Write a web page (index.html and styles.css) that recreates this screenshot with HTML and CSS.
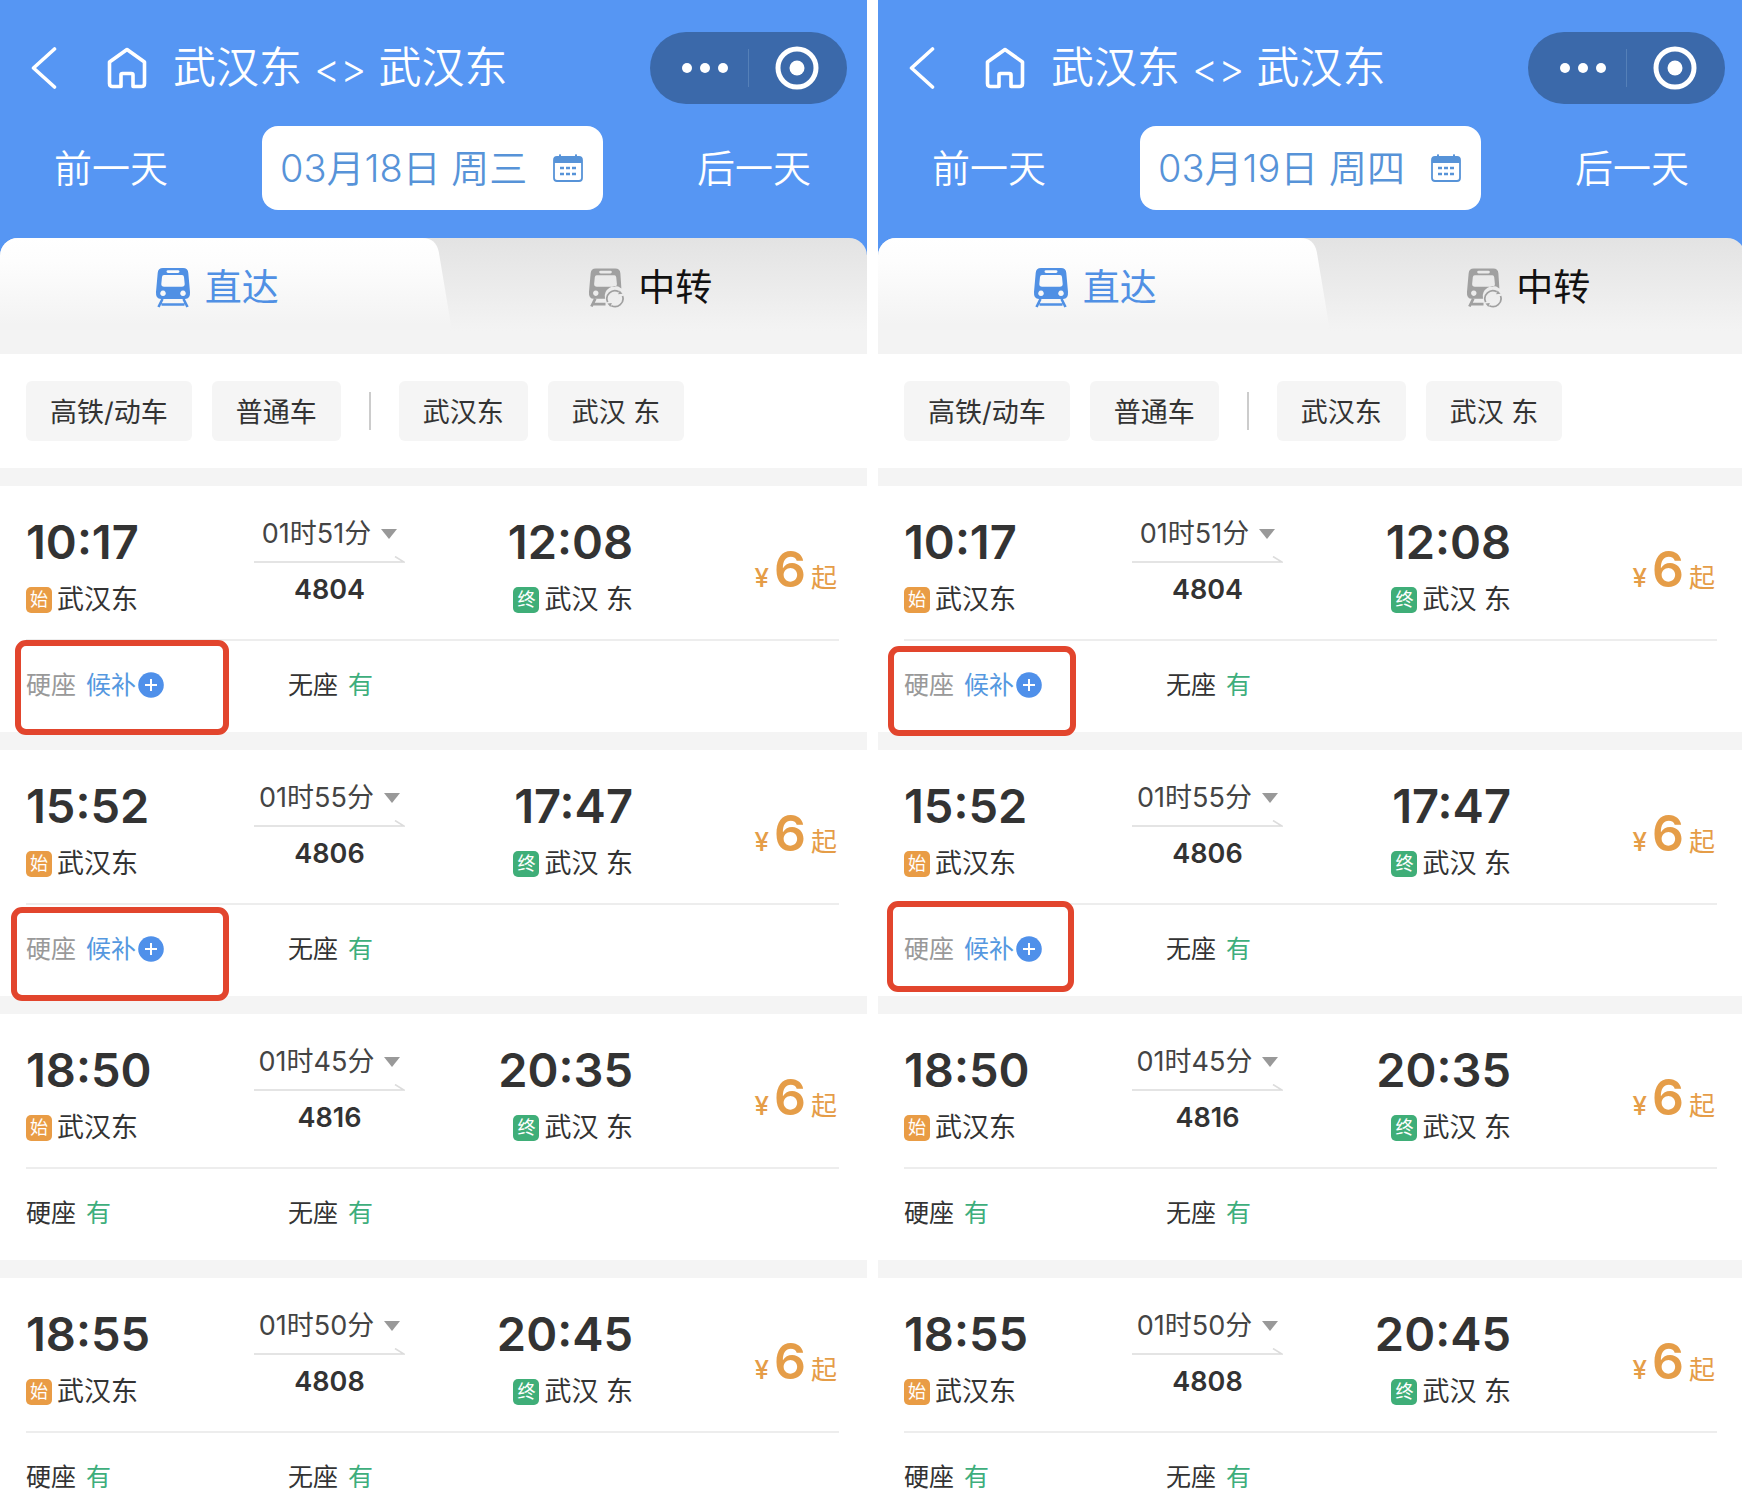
FILE: index.html
```html
<!DOCTYPE html>
<html lang="zh-CN">
<head>
<meta charset="utf-8">
<meta name="viewport" content="width=device-width, initial-scale=1">
<title>武汉东 &lt;&gt; 武汉东</title>
<link rel="stylesheet" href="styles.css">
</head>
<body>
<svg class="sprite" aria-hidden="true">
  <symbol id="back" viewBox="0 0 26 42"><path d="M23.500 2 2.500 21l21 19" fill="none" stroke="currentColor" stroke-width="3.600" stroke-linecap="round" stroke-linejoin="round"/></symbol>
  <symbol id="home" viewBox="0 0 40 42"><path d="M20 2.500 37.500 15v21.500q0 3-3 3h-8.500V28q0-1.500-1.500-1.500h-9q-1.500 0-1.500 1.500v11.500H5.500q-3 0-3-3V15z" fill="none" stroke="currentColor" stroke-width="3.600" stroke-linejoin="round"/></symbol>
  <symbol id="dots" viewBox="0 0 46 10"><g fill="currentColor"><circle cx="5" cy="5" r="5"/><circle cx="23" cy="5" r="5"/><circle cx="41" cy="5" r="5"/></g></symbol>
  <symbol id="target" viewBox="0 0 44 44"><circle cx="22" cy="22" r="19" fill="none" stroke="currentColor" stroke-width="5"/><circle cx="22" cy="22" r="7.500" fill="currentColor"/></symbol>
  <symbol id="calendar" viewBox="0 0 30 28"><path d="M4 3h22q3 0 3 3v18q0 3-3 3H4q-3 0-3-3V6q0-3 3-3z" fill="none" stroke="currentColor" stroke-width="1.800"/><path d="M1 9V5q0-2 3-2h2V1.500q0-1.500 1-1.500t1 1.500V3h14V1.500Q22 0 23 0t1 1.500V3h2q3 0 3 2v4z" fill="currentColor"/><path d="M7 14h4M13 14h4M19 14h4M7 20h4M13 20h4M19 20h4" stroke="currentColor" stroke-width="2.600"/></symbol>
  <symbol id="train" viewBox="0 0 36 40"><path fill="currentColor" fill-rule="evenodd" d="M8 0h20q5 0 5.300 5L35 24q.5 7-5 7H6q-5.500 0-5-7L2.700 5Q3 0 8 0zm5 2.200q-1.500 0-1.500 1.400T13 5h10q1.500 0 1.500-1.400T23 2.200zM9 7Q7.200 7 7 9l-.7 7q0 2.800 2.800 2.800h17.800q2.800 0 2.800-2.800L29 9q-.2-2-2-2zM8 22.500a2.800 2.800 0 1 0 .01 0zm20 0a2.800 2.800 0 1 0 .01 0z"/><path d="M7.500 31 3.500 39M28.500 31l4 8M6.500 36.500h23" fill="none" stroke="currentColor" stroke-width="2.600"/></symbol>
  <symbol id="transfer" viewBox="0 0 37 40"><path fill="currentColor" fill-rule="evenodd" d="M8 0h20q5 0 5.300 5l1 15.500A10.500 10.500 0 0 0 17.500 31H6q-5.500 0-5-7L2.700 5Q3 0 8 0zm5 2.200q-1.500 0-1.500 1.400T13 5h10q1.500 0 1.500-1.400T23 2.200zM9 7Q7.200 7 7 9l-.7 7q0 2.800 2.800 2.800h17.800q2.800 0 2.800-2.800L29 9q-.2-2-2-2zM8 22.500a2.800 2.800 0 1 0 .01 0z"/><path d="M7.500 31 3.500 39M5 36.500h13" fill="none" stroke="currentColor" stroke-width="2.800"/><path d="M20.200 34.500a8.200 8.200 0 0 1 11.500-10.600M35.500 28.200a8.200 8.200 0 0 1-11.500 10" fill="none" stroke="currentColor" stroke-width="1.800"/><path d="m31 26.500 4.500-.5-3-3.500zM24.500 35.500l-4.500.5 3 3.500z" fill="currentColor"/></symbol>
  <symbol id="arrow" viewBox="0 0 151 8"><path d="M0 6h150L141 0.500" fill="none" stroke="#dcdcdc" stroke-width="1.600"/></symbol>
  <symbol id="caret" viewBox="0 0 16 10"><path d="M0 0h16L8 10z" fill="#999"/></symbol>
  <symbol id="plus" viewBox="0 0 26 26"><circle cx="13" cy="13" r="12.800" fill="#4f90ea"/><path d="M13 7v12M7 13h12" stroke="#fff" stroke-width="2"/></symbol>
</svg>

<main class="compare">
  <section class="panel">
    <div class="screen">
      <header class="header">
        <div class="titlebar">
          <a class="back" href="#" aria-label="返回"><svg><use href="#back"/></svg></a>
          <a class="home" href="#" aria-label="首页"><svg><use href="#home"/></svg></a>
          <h1 class="route">武汉东 <span class="swap">&lt;&gt;</span> 武汉东</h1>
          <div class="capsule">
            <button class="more" aria-label="更多"><svg><use href="#dots"/></svg></button>
            <button class="close" aria-label="关闭"><svg><use href="#target"/></svg></button>
          </div>
        </div>
        <div class="datebar">
          <button class="day">前一天</button>
          <button class="date"><span>03月18日 周三</span><svg><use href="#calendar"/></svg></button>
          <button class="day">后一天</button>
        </div>
      </header>
      <nav class="tabs">
        <svg class="tab-shape" viewBox="0 0 450 116" preserveAspectRatio="none" aria-hidden="true"><defs><linearGradient id="fade" x1="0" y1="0" x2="0" y2="1"><stop offset="0" stop-color="#fff"/><stop offset=".2" stop-color="#fdfdfd"/><stop offset=".75" stop-color="#f3f3f3"/></linearGradient></defs><path d="M0 0h422q13 0 16 14l12 72v30H0z" fill="url(#fade)"/></svg>
        <button class="tab active"><svg><use href="#train"/></svg>直达</button>
        <button class="tab"><svg><use href="#transfer"/></svg>中转</button>
      </nav>
      <div class="filters">
        <button class="chip">高铁/动车</button>
        <button class="chip">普通车</button>
        <span class="rule"></span>
        <button class="chip">武汉东</button>
        <button class="chip">武汉 东</button>
      </div>
      <article class="card">
        <div class="trip">
          <div class="stop"><time>10:17</time><p><i class="start">始</i>武汉东</p></div>
          <div class="leg"><button class="duration">01时51分<svg><use href="#caret"/></svg></button><svg class="arrow"><use href="#arrow"/></svg><b>4804</b></div>
          <div class="stop end"><time>12:08</time><p><i class="final">终</i>武汉 东</p></div>
          <p class="price"><small>¥</small><b>6</b><span>起</span></p>
        </div>
        <div class="seats">
          <p class="seat none">硬座<button class="wait">候补<svg><use href="#plus"/></svg></button></p>
          <p class="seat">无座<em>有</em></p>
        </div>
        <span class="mark mark-a"></span>
      </article>
      <article class="card">
        <div class="trip">
          <div class="stop"><time>15:52</time><p><i class="start">始</i>武汉东</p></div>
          <div class="leg"><button class="duration">01时55分<svg><use href="#caret"/></svg></button><svg class="arrow"><use href="#arrow"/></svg><b>4806</b></div>
          <div class="stop end"><time>17:47</time><p><i class="final">终</i>武汉 东</p></div>
          <p class="price"><small>¥</small><b>6</b><span>起</span></p>
        </div>
        <div class="seats">
          <p class="seat none">硬座<button class="wait">候补<svg><use href="#plus"/></svg></button></p>
          <p class="seat">无座<em>有</em></p>
        </div>
        <span class="mark mark-b"></span>
      </article>
      <article class="card">
        <div class="trip">
          <div class="stop"><time>18:50</time><p><i class="start">始</i>武汉东</p></div>
          <div class="leg"><button class="duration">01时45分<svg><use href="#caret"/></svg></button><svg class="arrow"><use href="#arrow"/></svg><b>4816</b></div>
          <div class="stop end"><time>20:35</time><p><i class="final">终</i>武汉 东</p></div>
          <p class="price"><small>¥</small><b>6</b><span>起</span></p>
        </div>
        <div class="seats">
          <p class="seat">硬座<em>有</em></p>
          <p class="seat">无座<em>有</em></p>
        </div>
      </article>
      <article class="card">
        <div class="trip">
          <div class="stop"><time>18:55</time><p><i class="start">始</i>武汉东</p></div>
          <div class="leg"><button class="duration">01时50分<svg><use href="#caret"/></svg></button><svg class="arrow"><use href="#arrow"/></svg><b>4808</b></div>
          <div class="stop end"><time>20:45</time><p><i class="final">终</i>武汉 东</p></div>
          <p class="price"><small>¥</small><b>6</b><span>起</span></p>
        </div>
        <div class="seats">
          <p class="seat">硬座<em>有</em></p>
          <p class="seat">无座<em>有</em></p>
        </div>
      </article>
    </div>
  </section>

  <section class="panel">
    <div class="screen">
      <header class="header">
        <div class="titlebar">
          <a class="back" href="#" aria-label="返回"><svg><use href="#back"/></svg></a>
          <a class="home" href="#" aria-label="首页"><svg><use href="#home"/></svg></a>
          <h1 class="route">武汉东 <span class="swap">&lt;&gt;</span> 武汉东</h1>
          <div class="capsule">
            <button class="more" aria-label="更多"><svg><use href="#dots"/></svg></button>
            <button class="close" aria-label="关闭"><svg><use href="#target"/></svg></button>
          </div>
        </div>
        <div class="datebar">
          <button class="day">前一天</button>
          <button class="date"><span>03月19日 周四</span><svg><use href="#calendar"/></svg></button>
          <button class="day">后一天</button>
        </div>
      </header>
      <nav class="tabs">
        <svg class="tab-shape" viewBox="0 0 450 116" preserveAspectRatio="none" aria-hidden="true"><path d="M0 0h422q13 0 16 14l12 72v30H0z" fill="url(#fade)"/></svg>
        <button class="tab active"><svg><use href="#train"/></svg>直达</button>
        <button class="tab"><svg><use href="#transfer"/></svg>中转</button>
      </nav>
      <div class="filters">
        <button class="chip">高铁/动车</button>
        <button class="chip">普通车</button>
        <span class="rule"></span>
        <button class="chip">武汉东</button>
        <button class="chip">武汉 东</button>
      </div>
      <article class="card">
        <div class="trip">
          <div class="stop"><time>10:17</time><p><i class="start">始</i>武汉东</p></div>
          <div class="leg"><button class="duration">01时51分<svg><use href="#caret"/></svg></button><svg class="arrow"><use href="#arrow"/></svg><b>4804</b></div>
          <div class="stop end"><time>12:08</time><p><i class="final">终</i>武汉 东</p></div>
          <p class="price"><small>¥</small><b>6</b><span>起</span></p>
        </div>
        <div class="seats">
          <p class="seat none">硬座<button class="wait">候补<svg><use href="#plus"/></svg></button></p>
          <p class="seat">无座<em>有</em></p>
        </div>
        <span class="mark mark-c"></span>
      </article>
      <article class="card">
        <div class="trip">
          <div class="stop"><time>15:52</time><p><i class="start">始</i>武汉东</p></div>
          <div class="leg"><button class="duration">01时55分<svg><use href="#caret"/></svg></button><svg class="arrow"><use href="#arrow"/></svg><b>4806</b></div>
          <div class="stop end"><time>17:47</time><p><i class="final">终</i>武汉 东</p></div>
          <p class="price"><small>¥</small><b>6</b><span>起</span></p>
        </div>
        <div class="seats">
          <p class="seat none">硬座<button class="wait">候补<svg><use href="#plus"/></svg></button></p>
          <p class="seat">无座<em>有</em></p>
        </div>
        <span class="mark mark-d"></span>
      </article>
      <article class="card">
        <div class="trip">
          <div class="stop"><time>18:50</time><p><i class="start">始</i>武汉东</p></div>
          <div class="leg"><button class="duration">01时45分<svg><use href="#caret"/></svg></button><svg class="arrow"><use href="#arrow"/></svg><b>4816</b></div>
          <div class="stop end"><time>20:35</time><p><i class="final">终</i>武汉 东</p></div>
          <p class="price"><small>¥</small><b>6</b><span>起</span></p>
        </div>
        <div class="seats">
          <p class="seat">硬座<em>有</em></p>
          <p class="seat">无座<em>有</em></p>
        </div>
      </article>
      <article class="card">
        <div class="trip">
          <div class="stop"><time>18:55</time><p><i class="start">始</i>武汉东</p></div>
          <div class="leg"><button class="duration">01时50分<svg><use href="#caret"/></svg></button><svg class="arrow"><use href="#arrow"/></svg><b>4808</b></div>
          <div class="stop end"><time>20:45</time><p><i class="final">终</i>武汉 东</p></div>
          <p class="price"><small>¥</small><b>6</b><span>起</span></p>
        </div>
        <div class="seats">
          <p class="seat">硬座<em>有</em></p>
          <p class="seat">无座<em>有</em></p>
        </div>
      </article>
    </div>
  </section>
</main>
</body>
</html>
```
FILE: styles.css
```css
* {
  box-sizing: border-box;
}

body {
  margin: 0;
  background: #fff;
  color: #333;
  font-family: Inter, "Noto Sans CJK SC", sans-serif;
}

h1,
p {
  margin: 0;
  font-weight: 400;
}

i,
em {
  font-style: normal;
}

a,
button {
  color: inherit;
  text-decoration: none;
}

button {
  padding: 0;
  border: 0;
  background: none;
  font: inherit;
}

svg {
  display: block;
  flex: none;
}

.sprite {
  position: absolute;
  width: 0;
  height: 0;
}

.compare {
  display: grid;
  grid-template-columns: 867fr 864fr;
  column-gap: 11px;
}

.panel {
  min-width: 0;
  overflow: hidden;
}

/* The second screen is cropped slightly on its right side. */
.panel + .panel .screen {
  margin-right: -3px;
}

/* Header */

.header {
  height: 256px;
  margin-bottom: -18px;
  padding-top: 32px;
  background: #5696f3;
  color: #fff;
}

.titlebar {
  display: flex;
  align-items: center;
  height: 72px;
  padding: 0 20px 0 31px;
}

.back svg {
  width: 26px;
  height: 42px;
}

.home {
  margin: 0 26px 0 50px;
}

.home svg {
  width: 40px;
  height: 42px;
}

.route {
  font-size: 43px;
  font-weight: 350;
  line-height: 60px;
  white-space: nowrap;
}

.swap {
  font-size: 40px;
}

.capsule {
  display: flex;
  align-items: center;
  width: 197px;
  height: 72px;
  margin-left: auto;
  border-radius: 36px;
  background: #3b69aa;
}

.more {
  display: flex;
  align-items: center;
  height: 38px;
  padding: 0 20px 0 32px;
  border-right: 1px solid #5580b8;
}

.more svg {
  width: 46px;
  height: 10px;
}

.close {
  margin-left: 26px;
}

.close svg {
  width: 44px;
  height: 44px;
}

.datebar {
  display: flex;
  align-items: center;
  justify-content: space-between;
  margin-top: 22px;
  padding: 0 56px 0 54px;
  font-size: 38px;
  font-weight: 350;
  line-height: 56px;
}

.date {
  display: flex;
  align-items: center;
  justify-content: space-between;
  width: 341px;
  height: 84px;
  padding: 0 20px 0 18px;
  border-radius: 16px;
  background: #fff;
  color: #5793d8;
  white-space: nowrap;
}

.date svg {
  width: 30px;
  height: 28px;
}

/* Tabs */

.tabs {
  position: relative;
  display: grid;
  grid-template-columns: 1fr 1fr;
  height: 116px;
  border-radius: 18px 18px 0 0;
  background: linear-gradient(#e3e3e3, #f3f3f3 80%);
  overflow: hidden;
}

.tab-shape {
  position: absolute;
  inset: 0 auto auto 0;
  width: 52%;
  height: 100%;
}

.tab {
  position: relative;
  display: flex;
  align-items: center;
  justify-content: center;
  gap: 14px;
  padding-bottom: 17px;
  color: #111;
  font-size: 37px;
  line-height: 56px;
}

.tab svg {
  width: 36px;
  height: 40px;
  color: #a0a0a0;
}

.active,
.active svg {
  color: #5090e4;
}

/* Filters */

.filters {
  display: flex;
  align-items: center;
  gap: 20px;
  height: 114px;
  padding: 0 26px;
}

.chip {
  height: 60px;
  padding: 3px 24px 0;
  border-radius: 6px;
  background: #f5f5f5;
  font-size: 27px;
  line-height: 57px;
  white-space: nowrap;
}

.rule {
  width: 2px;
  height: 38px;
  margin: 0 8px;
  background: #ccc;
}

/* Trains */

.card {
  position: relative;
  border-top: 18px solid #f4f4f4;
}

.trip {
  display: grid;
  grid-template-columns: 228fr 151fr 228fr 206fr;
  height: 155px;
  margin: 0 28px 0 26px;
  padding-top: 28px;
  border-bottom: 2px solid #ededed;
}

.stop time {
  display: block;
  font-size: 47px;
  font-weight: 600;
  line-height: 56px;
}

.stop p {
  display: flex;
  align-items: center;
  gap: 5px;
  margin-top: 10px;
  font-size: 27px;
  line-height: 40px;
}

.stop i {
  width: 26px;
  height: 26px;
  border-radius: 5px;
  color: #fff;
  font-size: 18px;
  line-height: 26px;
  text-align: center;
}

.start {
  background: #e99c45;
}

.final {
  background: #3fae78;
}

.end {
  display: flex;
  flex-direction: column;
  align-items: flex-end;
}

.leg {
  display: flex;
  flex-direction: column;
  align-items: center;
  font-size: 27px;
}

.duration {
  display: flex;
  align-items: center;
  gap: 10px;
  color: #444;
  line-height: 40px;
  white-space: nowrap;
}

.duration svg {
  width: 16px;
  height: 10px;
}

.arrow {
  width: 100%;
  height: 8px;
  margin-top: 2px;
}

.leg b {
  font-weight: 600;
  line-height: 52px;
}

.price {
  display: flex;
  align-items: baseline;
  justify-content: flex-end;
  gap: 5px;
  padding: 27px 2px 0 0;
  color: #e59d48;
  font-size: 26px;
  line-height: 56px;
}

.price small {
  font-size: 26px;
  font-weight: 500;
}

.price b {
  font-size: 50px;
  font-weight: 600;
}

.seats {
  display: grid;
  grid-template-columns: 262fr 551fr;
  padding: 28px 28px 31px 26px;
}

.card:last-child .seats {
  padding-bottom: 14px;
}

.seat {
  display: flex;
  align-items: center;
  gap: 10px;
  font-size: 25px;
  line-height: 32px;
}

.seat em {
  color: #3eae7c;
}

.none {
  color: #999;
}

.wait {
  display: flex;
  align-items: center;
  gap: 2px;
  color: #5598e0;
}

.wait svg {
  width: 26px;
  height: 26px;
}

/* Highlight boxes over the waitlist seats */

.mark {
  position: absolute;
  z-index: 1;
  border: 6px solid #e2452d;
  border-radius: 11px;
}

.mark-a {
  top: 154px;
  left: 15px;
  width: 214px;
  height: 95px;
}

.mark-b {
  top: 157px;
  left: 11px;
  width: 218px;
  height: 94px;
}

.mark-c {
  top: 160px;
  left: 10px;
  width: 188px;
  height: 90px;
}

.mark-d {
  top: 151px;
  left: 9px;
  width: 187px;
  height: 91px;
}
```
